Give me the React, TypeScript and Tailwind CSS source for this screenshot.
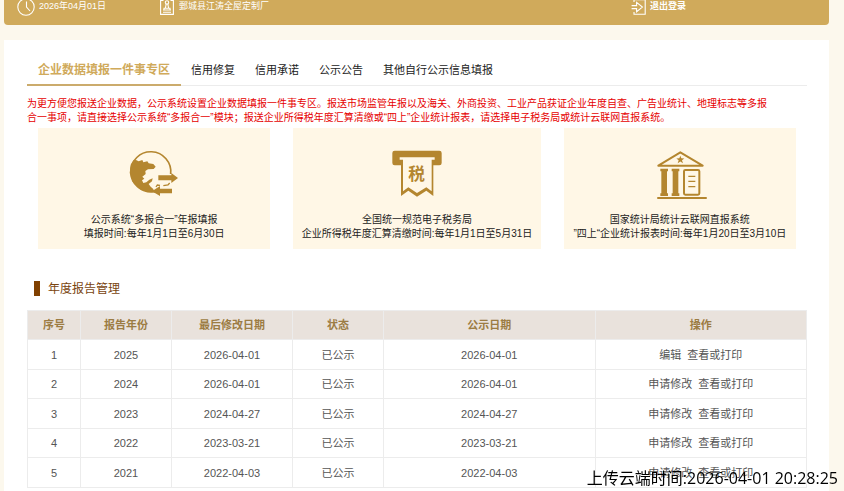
import type { ReactNode } from 'react';

const tabs = ['信用修复', '信用承诺', '公示公告', '其他自行公示信息填报'];

const reports = [
  { id: 1, year: '2025', modified: '2026-04-01', status: '已公示', published: '2026-04-01', action: '编辑' },
  { id: 2, year: '2024', modified: '2026-04-01', status: '已公示', published: '2026-04-01', action: '申请修改' },
  { id: 3, year: '2023', modified: '2024-04-27', status: '已公示', published: '2024-04-27', action: '申请修改' },
  { id: 4, year: '2022', modified: '2023-03-21', status: '已公示', published: '2023-03-21', action: '申请修改' },
  { id: 5, year: '2021', modified: '2022-04-03', status: '已公示', published: '2022-04-03', action: '申请修改' },
];

const ClockIcon = () => (
  <svg className="h-[18px] w-[18px]" viewBox="0 0 18 18" fill="none" stroke="currentColor" strokeWidth="1.1">
    <circle cx="9" cy="9" r="8.2" />
    <path d="M9.500 3.500v5.500l3.500 4" />
  </svg>
);

const CompanyIcon = () => (
  <svg className="h-4 w-[14px]" viewBox="0 0 14 16" fill="none" stroke="currentColor" strokeWidth="1.1">
    <path d="M3.5 1.5H.6v13.9h12.8V1.500h-2.900" />
    <circle cx="7" cy="3.4" r="1.7" />
    <path d="M6.2 5.2 5.4 9M7.8 5.2 8.6 9M4 11V9.3h6V11M3 11h8M3 13.2h8" />
  </svg>
);

const LogoutIcon = () => (
  <svg className="h-4 w-[15px]" viewBox="0 0 15 16" fill="none" stroke="currentColor" strokeWidth="1.1">
    <path d="M3 3V.6h11.2v14.6H3V13" />
    <path d="M.6 6.600h5V3.400l5.800 4.700-5.800 4.700V9.600h-5" />
  </svg>
);

const GlobeIcon = () => (
  <svg className="h-[52px] w-[56px]" viewBox="18 24 168 156">
    <path d="M98 155A60 60 0 1 1 152 102" fill="none" stroke="#b4862f" strokeWidth="5" />
    <path
      d="M32 74 40 61 48 60 56 64 67 60 70 67 82 64 86 70 100 72 107 80 101 87 84 88 76 93 77 102 67 110 73 116 66 121 70 129 79 127 88 119 98 115 96 124 86 132 92 140 99 146 106 158 81 157 56 145 38 125 29 99Z"
      fill="#b4862f"
    />
    <path d="M115 106h39v-7l20 15-20 15v-8h-39Z" fill="#b4862f" />
    <path d="M156 146h-36v-8l-24 16 24 14v-8h36Z" fill="#b4862f" />
    <path d="M108 141 112 135 120 136M130 137 144 135 149 129" fill="none" stroke="#b4862f" strokeWidth="4" />
  </svg>
);

const TaxIcon = () => (
  <svg className="h-[52px] w-[56px]" viewBox="25 24 168 156">
    <path
      d="M42 32H176Q183 32 183 39V69Q183 76 176 76H158V168L137 152 109 170 83 152 61 168V76H42Q35 76 35 69V39Q35 32 42 32Z"
      fill="#b4862f"
    />
    <path d="M57 52H162V59H153V154L137 142 109 159 83 142 67 154V59H57Z" fill="#fff7e6" />
    <text
      x="108"
      y="120"
      textAnchor="middle"
      fontSize="50"
      fontWeight="700"
      fill="#b4862f"
      fontFamily="'Noto Sans CJK SC', sans-serif"
    >
      税
    </text>
  </svg>
);

const BureauIcon = () => (
  <svg className="h-[52px] w-[56px]" viewBox="18 24 168 156">
    <path d="M37 77 103 37 170 77Z" fill="none" stroke="#b4862f" strokeWidth="6" strokeLinejoin="round" />
    <path d="m103 47 3 8 9 .5-7 5 3 9-8-5-8 5 3-9-7-5 9-.5Z" fill="#b4862f" />
    <path d="M43 86h23v8h-3v66h3v8H43v-8h3V94h-3ZM77 86h23v8h-3v66h3v8H77v-8h3V94h-3Z" fill="#b4862f" />
    <rect x="114" y="90" width="46" height="74" rx="4" fill="none" stroke="#b4862f" strokeWidth="6" />
    <path d="M127 109h21M127 124h21M127 140h21" stroke="#b4862f" strokeWidth="4" />
    <path d="M36 174H180" stroke="#b4862f" strokeWidth="6" strokeLinecap="round" />
  </svg>
);

const InfoCard = ({ icon, title, period, className }: { icon: ReactNode; title: string; period: string; className: string }) => (
  <a
    href="#"
    className={`flex flex-col items-center gap-[13px] bg-[#fff7e6] pt-5 pb-2 text-center text-[10px] leading-[14px] text-[#222] ${className}`}
  >
    {icon}
    <span className="whitespace-nowrap">
      {title}
      <br />
      {period}
    </span>
  </a>
);

const App = () => {
  return (
    <div className="flex min-h-screen flex-col gap-[15px] bg-[#fcf8ed] pr-[15px] pl-1 font-['Liberation_Sans','Noto_Sans_CJK_SC',sans-serif]">
      <header className="flex h-[25px] items-end overflow-hidden rounded-b bg-[#d0aa5b] text-[9px] text-white">
        <div className="grid h-[37px] w-full grid-cols-[143px_1fr_198px] items-center pl-[13px]">
          <span className="flex items-center gap-1">
            <ClockIcon />
            2026年04月01日
          </span>
          <span className="flex items-center gap-[5px]">
            <CompanyIcon />
            鄄城县江涛全屋定制厂
          </span>
          <button type="button" className="flex items-center gap-1 justify-self-start font-bold">
            <LogoutIcon />
            退出登录
          </button>
        </div>
      </header>

      <main className="grow bg-white pt-[15px] pr-[22px] pl-[23px]">
        <nav className="flex h-[31px] items-start border-b border-[#ececec] text-[11px] text-[#222]">
          <button type="button" className="h-[31px] border-b-2 border-[#cbab6c] px-[11px] text-[12px] font-bold text-[#d0aa5b]">
            企业数据填报一件事专区
          </button>
          {tabs.map((tab) => (
            <button key={tab} type="button" className="h-[30px] px-[10px]">
              {tab}
            </button>
          ))}
        </nav>

        <p className="mt-[11px] text-[10px] leading-[14px] whitespace-nowrap text-[#e60000]">
          为更方便您报送企业数据，公示系统设置企业数据填报一件事专区。报送市场监管年报以及海关、外商投资、工业产品获证企业年度自查、广告业统计、地理标志等多报
          <br />
          合一事项，请直接选择公示系统“多报合一”模块；报送企业所得税年度汇算清缴或“四上”企业统计报表，请选择电子税务局或统计云联网直报系统。
        </p>

        <section className="mt-[3px] flex gap-[23px] px-[11px]">
          <InfoCard
            icon={<GlobeIcon />}
            title="公示系统“多报合一”年报填报"
            period="填报时间:每年1月1日至6月30日"
            className="flex-[232]"
          />
          <InfoCard
            icon={<TaxIcon />}
            title="全国统一规范电子税务局"
            period="企业所得税年度汇算清缴时间:每年1月1日至5月31日"
            className="flex-[247]"
          />
          <InfoCard
            icon={<BureauIcon />}
            title="国家统计局统计云联网直报系统"
            period="”四上“企业统计报表时间:每年1月20日至3月10日"
            className="flex-[232]"
          />
        </section>

        <section>
          <h2 className="mt-[31px] mb-[15px] ml-[7px] flex items-center gap-2 text-[12px] leading-[15px] text-[#7a4510]">
            <span className="h-[15px] w-[6px] bg-[#804000]" />
            <span className="pt-[2px]">年度报告管理</span>
          </h2>
          <table className="-mt-[2px] w-full table-fixed border-collapse text-center text-[11px] leading-[14px] text-[#555]">
            <colgroup>
              <col className="w-[53px]" />
              <col className="w-[91px]" />
              <col className="w-[121px]" />
              <col className="w-[91px]" />
              <col />
              <col />
            </colgroup>
            <thead className="bg-[#e9e2dc] text-[#9c7c43]">
              <tr className="h-[29px] [&>th]:border [&>th]:border-[#ececec]">
                <th>序号</th>
                <th>报告年份</th>
                <th>最后修改日期</th>
                <th>状态</th>
                <th>公示日期</th>
                <th>操作</th>
              </tr>
            </thead>
            <tbody>
              {reports.map((report) => (
                <tr key={report.id} className="h-[30px] even:h-[29px] [&>td]:border [&>td]:border-[#ececec]">
                  <td>{report.id}</td>
                  <td>{report.year}</td>
                  <td>{report.modified}</td>
                  <td>{report.status}</td>
                  <td>{report.published}</td>
                  <td>
                    <div className="flex justify-center gap-[6px]">
                      <a href="#">{report.action}</a>
                      <a href="#">查看或打印</a>
                    </div>
                  </td>
                </tr>
              ))}
            </tbody>
          </table>
        </section>
      </main>

      <div className="fixed right-[6px] bottom-1 font-['Open_Sans','Noto_Sans_CJK_SC',sans-serif] text-[16px] leading-[18px] text-black">
        上传云端时间:2026-04-01 20:28:25
      </div>
    </div>
  );
};

export default App;
